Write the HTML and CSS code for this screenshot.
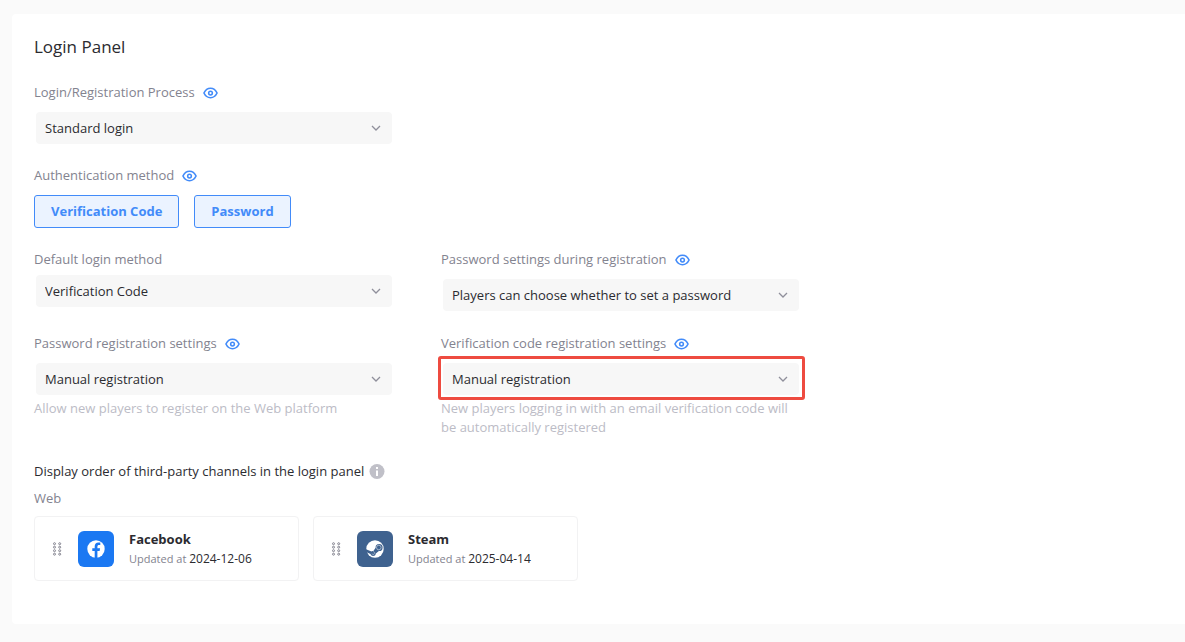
FILE: index.html
```html
<!DOCTYPE html>
<html lang="en">
<head>
<meta charset="utf-8">
<title>Login Panel</title>
<link rel="stylesheet" href="styles.css">
</head>
<body>
<svg class="sprite" aria-hidden="true">
  <symbol id="eye" viewBox="0 0 16 12">
    <path d="M1 6C2.600 2.600 5 1 8 1S13.400 2.600 15 6C13.400 9.400 11 11 8 11S2.600 9.400 1 6Z" fill="none" stroke="currentColor" stroke-width="1.700" stroke-linejoin="round"/>
    <circle cx="8" cy="6" r="2" fill="none" stroke="currentColor" stroke-width="1.600"/>
  </symbol>
  <symbol id="chevron" viewBox="0 0 10 6">
    <path d="M1 1l4 4 4-4" fill="none" stroke="currentColor" stroke-width="1.300"/>
  </symbol>
  <symbol id="grip" viewBox="0 0 10 14">
    <g fill="none" stroke="currentColor" stroke-width="1">
      <circle cx="2.500" cy="1.700" r="1"/><circle cx="2.500" cy="5.200" r="1"/><circle cx="2.500" cy="8.700" r="1"/><circle cx="2.500" cy="12.200" r="1"/>
      <circle cx="7.700" cy="1.700" r="1"/><circle cx="7.700" cy="5.200" r="1"/><circle cx="7.700" cy="8.700" r="1"/><circle cx="7.700" cy="12.200" r="1"/>
    </g>
  </symbol>
</svg>
<main class="panel">
  <h1 class="title">Login Panel</h1>
  <div class="grid">
    <div class="field">
      <div class="label"><label for="process">Login/Registration Process</label><button class="preview" type="button" aria-label="Preview"><svg class="eye"><use href="#eye"/></svg></button></div>
      <div class="control"><select id="process"><option>Standard login</option></select><svg class="chevron"><use href="#chevron"/></svg></div>
    </div>
    <div class="field wide">
      <div class="label"><span id="auth">Authentication method</span><button class="preview" type="button" aria-label="Preview"><svg class="eye"><use href="#eye"/></svg></button></div>
      <div class="methods" role="group" aria-labelledby="auth">
        <button class="method" type="button" aria-pressed="true">Verification Code</button>
        <button class="method" type="button" aria-pressed="true">Password</button>
      </div>
    </div>
    <div class="field compact">
      <div class="label"><label for="default">Default login method</label></div>
      <div class="control"><select id="default"><option>Verification Code</option></select><svg class="chevron"><use href="#chevron"/></svg></div>
    </div>
    <div class="field">
      <div class="label"><label for="setting">Password settings during registration</label><button class="preview" type="button" aria-label="Preview"><svg class="eye"><use href="#eye"/></svg></button></div>
      <div class="control"><select id="setting"><option>Players can choose whether to set a password</option></select><svg class="chevron"><use href="#chevron"/></svg></div>
    </div>
    <div class="field">
      <div class="label"><label for="pwreg">Password registration settings</label><button class="preview" type="button" aria-label="Preview"><svg class="eye"><use href="#eye"/></svg></button></div>
      <div class="control"><select id="pwreg"><option>Manual registration</option></select><svg class="chevron"><use href="#chevron"/></svg></div>
      <p class="help">Allow new players to register on the Web platform</p>
    </div>
    <div class="field">
      <div class="label"><label for="codereg">Verification code registration settings</label><button class="preview" type="button" aria-label="Preview"><svg class="eye"><use href="#eye"/></svg></button></div>
      <div class="control marked"><select id="codereg"><option>Manual registration</option></select><svg class="chevron"><use href="#chevron"/></svg></div>
      <p class="help">New players logging in with an email verification code will be automatically registered</p>
    </div>
  </div>
  <section class="channels">
    <h2 class="subtitle">Display order of third-party channels in the login panel
      <svg class="info" viewBox="0 0 16 16"><circle cx="8" cy="8.500" r="7.500" fill="#c0c0c8"/><path d="M7 4h2v2H7zM7 7.500h2V13H7z" fill="#fff"/></svg>
    </h2>
    <p class="platform">Web</p>
    <ul class="cards">
      <li class="card">
        <svg class="grip"><use href="#grip"/></svg>
        <svg class="logo" viewBox="0 0 36 36"><rect width="36" height="36" rx="6" fill="#1b78f2"/><circle cx="18" cy="18" r="8.700" fill="#fff"/><path d="M16.700 27v-7h-2.400v-2.700h2.400v-2c0-2.600 1.500-3.900 3.700-3.900l1.900.200v2.300h-1.200c-1.200 0-1.700.600-1.700 1.500v1.900h2.700l-.500 2.700h-2.200v7z" fill="#1b78f2"/></svg>
        <div class="details"><strong class="name">Facebook</strong><span class="updated">Updated at <time>2024-12-06</time></span></div>
      </li>
      <li class="card">
        <svg class="grip"><use href="#grip"/></svg>
        <svg class="logo" viewBox="0 0 36 36"><rect width="36" height="36" rx="6" fill="#3f628f"/><circle cx="18" cy="18" r="8.700" fill="#fff"/><path d="M9 18.200l5.500 2.200c.600-.400 1.200-.500 1.900-.400l2.200-3.300a3.500 3.500 0 1 1 3.300 3.400l-3.100 2.300c0 3-4.600 3.500-5.300.600L9 21z" fill="#3f628f"/><circle cx="21.800" cy="16.500" r="2.300" fill="none" stroke="#fff" stroke-width=".500"/><path d="M14.700 22.800l1.200.500a1.300 1.300 0 0 0 1-2.400l-1.100-.400" fill="none" stroke="#fff" stroke-width=".400"/></svg>
        <div class="details"><strong class="name">Steam</strong><span class="updated">Updated at <time>2025-04-14</time></span></div>
      </li>
    </ul>
  </section>
</main>
</body>
</html>
```
FILE: styles.css
```css
* { box-sizing: border-box; }
body {
  margin: 0;
  padding: 14px 0 18px 12px;
  background: #fafafa;
  color: #2b2b30;
  font: 13px/20px "Open Sans", "Noto Sans", sans-serif;
}
h1, h2, p, ul { margin: 0; padding: 0; font-weight: 400; }
button, select { font: inherit; }
.sprite { position: absolute; width: 0; height: 0; }
.panel {
  padding: 22px 22px 43px;
  background: #fff;
  border-radius: 4px 0 0 4px;
}
.title { font-size: 17px; line-height: 22px; }
.grid {
  display: grid;
  grid-template-columns: repeat(2, minmax(0, 358px));
  column-gap: 49px;
  row-gap: 22px;
  margin-top: 24px;
}
.field { display: flex; flex-direction: column; gap: 10px; }
.wide { grid-column: 1 / -1; margin: -1px 0; }
.field:first-child { grid-column: 1; }
.compact { gap: 6px; }
.label { display: flex; align-items: center; gap: 8px; height: 20px; color: #83838f; }
.preview {
  display: flex;
  padding: 1px 0 0;
  border: 0;
  background: none;
  color: #428bf9;
  cursor: pointer;
}
.eye { width: 15px; height: 12px; }
.control { position: relative; margin-left: 2px; }
.control select {
  display: block;
  width: 100%;
  height: 32px;
  padding: 0 32px 0 9px;
  border: 0;
  border-radius: 4px;
  background: #f7f7f7;
  color: #2b2b30;
  appearance: none;
}
.chevron {
  position: absolute;
  top: 13px;
  right: 11px;
  width: 10px;
  height: 6px;
  color: #8f8f9b;
  pointer-events: none;
}
.marked::after {
  content: "";
  position: absolute;
  inset: -7px -6px -5px -5px;
  border: 3px solid #ee4b40;
  border-radius: 3px;
  pointer-events: none;
}
.methods { display: flex; gap: 15px; }
.method {
  height: 33px;
  padding: 0 17px 2px;
  border: 1px solid #428bf9;
  border-radius: 3px;
  background: #ebf3ff;
  color: #428bf9;
  font-weight: 700;
}
.help { margin-top: -6px; color: #bcbcc6; line-height: 19px; }
.channels { margin-top: 24px; }
.subtitle { display: flex; align-items: center; gap: 5px; font-size: 13px; }
.info { width: 16px; height: 16px; }
.platform { margin-top: 7px; color: #83838f; }
.cards { display: flex; flex-wrap: wrap; gap: 14px; margin-top: 8px; list-style: none; }
.card {
  display: flex;
  align-items: center;
  width: 265px;
  height: 65px;
  padding: 0 17px;
  border: 1px solid #f2f2f3;
  border-radius: 4px;
}
.grip { width: 10px; height: 14px; color: #83838f; }
.logo { width: 36px; height: 36px; margin: 0 15px 0 16px; }
.details { display: flex; flex-direction: column; }
.name { font-weight: 700; line-height: 20px; }
.updated { color: #83838f; font-size: 11px; line-height: 20px; }
.updated time { color: #2b2b30; font-size: 12px; }
.method { padding: 0 16px 2px; }
```
